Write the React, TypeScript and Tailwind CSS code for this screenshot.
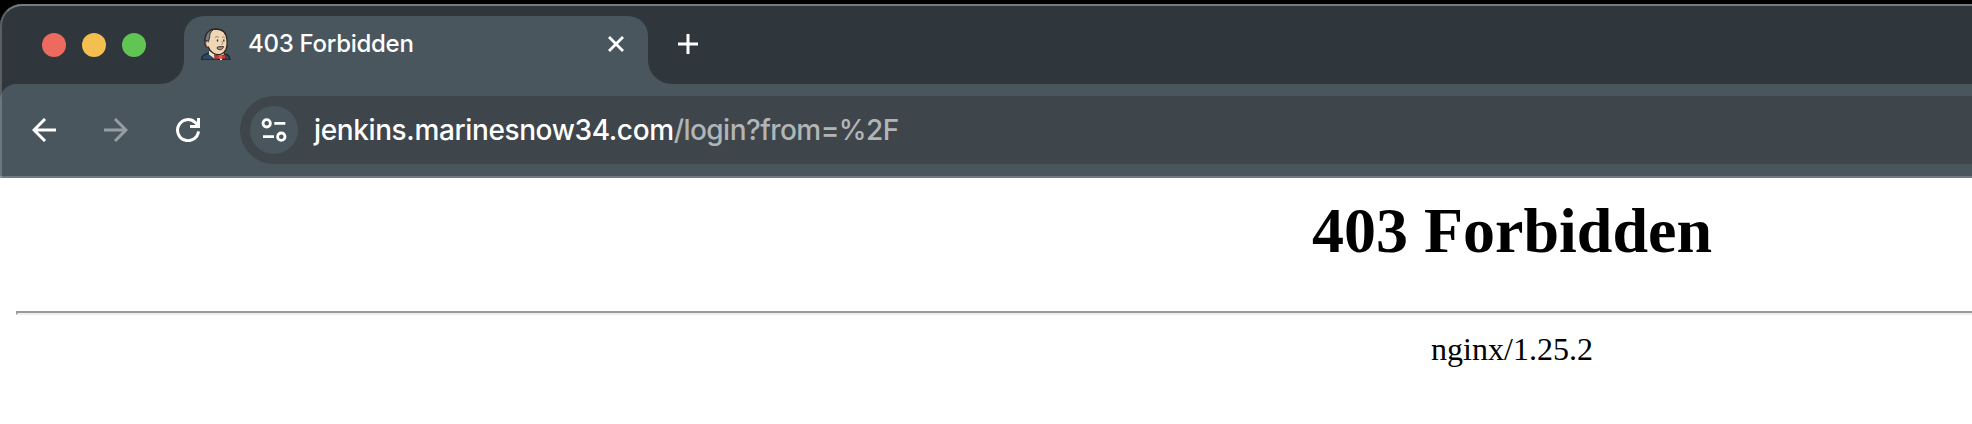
function JenkinsIcon() {
  return (
    <svg width="32" height="32" viewBox="0 0 32 32" aria-hidden="true">
      <path d="M1.500 32C1.500 28.500 2.500 27.500 5 26.500L10 24.500L21 25.500L27 26.500C29.500 28 30 30 30 32Z" fill="#2d4a63" stroke="#1f2529" strokeWidth="1.300" />
      <path d="M9 23L9 26.500L15 31H23L24 25Z" fill="#f3e3c8" />
      <path d="M5 15C4 6.500 8 1.200 16 1C23.500 1 26.500 6 27 12C27.600 18 27 24.500 20.500 26.500C15 27.500 10 24 8.500 19.500C6 19.500 5 17.500 5 15Z" fill="#efd6b5" stroke="#2b2523" strokeWidth="1.300" />
      <path d="M5.200 13.500C5 7 8 2.500 13 1.800C10.500 4 9.500 6.500 9.700 9L8.200 14.500L7 12.200Z" fill="#777a80" stroke="#2b2523" strokeWidth="0.900" />
      <path d="M8.500 13.500C6.500 12.500 5.200 14.500 6 17C6.500 19 8 19.500 9 18.500" fill="#efd6b5" stroke="#5a4639" strokeWidth="0.900" />
      <path d="M15 9.500C16.500 8.200 18 8.500 18.800 9.500M22 9.500C23.500 8.500 24.500 9 25 10" fill="none" stroke="#8f7661" strokeWidth="0.900" />
      <path d="M17.500 11.500V13.500M23.800 11.500V13.500" stroke="#2b2523" strokeWidth="1.300" />
      <path d="M21.500 13C23 15 23.300 16.100 21 16.500" fill="none" stroke="#8f7661" strokeWidth="0.900" />
      <path d="M17 19.500C19 18 21.500 19 23.500 18.500C23 21.500 20 22.500 17.500 21Z" fill="#a79485" stroke="#3b302b" strokeWidth="1" />
      <path d="M14.500 26.500L20 28.200L25.500 26.500L26 31L20.500 30L15 31.500Z" fill="#d9352f" stroke="#5c2021" strokeWidth="0.700" />
      <path d="M19 27.500H22V30.500H19Z" fill="#ee5a50" />
      <path d="M20 31H22V32H20Z" fill="#fff" />
    </svg>
  );
}

function TabStrip() {
  return (
    <div className="flex h-[80px] shrink-0 bg-[#30373c] pt-[2px]">
      <div className="w-[184px] shrink-0 bg-[linear-gradient(to_right,#30373c_50%,#49565e_50%)]">
        <div className="flex h-full items-start gap-4 rounded-br-[24px] bg-[#30373c] pt-[27px] pl-[42px]">
          <span className="size-6 rounded-full bg-[#ed6a5e]" />
          <span className="size-6 rounded-full bg-[#f5bf4f]" />
          <span className="size-6 rounded-full bg-[#61c554]" />
        </div>
      </div>
      <div className="w-[464px] shrink-0 pt-[10px]">
        <div className="flex h-[68px] items-start rounded-t-[20px] bg-[#49565e] pt-[12px] pl-[16px]">
          <JenkinsIcon />
          <span className="ml-[16px] w-[358px] font-['Inter'] text-[24px] leading-[32px] font-medium tracking-[-0.28px] text-white">403 Forbidden</span>
          <svg width="20" height="20" viewBox="0 0 20 20" className="mt-[6px]" aria-hidden="true">
            <path d="M3 3L17 17M17 3L3 17" stroke="#fff" strokeWidth="2.800" />
          </svg>
        </div>
      </div>
      <div className="grow bg-[linear-gradient(to_right,#49565e_40px,#30373c_40px)]">
        <div className="h-full rounded-bl-[24px] bg-[#30373c] pt-[28px] pl-[30px]">
          <svg width="20" height="20" viewBox="0 0 20 20" aria-hidden="true">
            <path d="M10 0V20M0 10H20" stroke="#fff" strokeWidth="3" />
          </svg>
        </div>
      </div>
    </div>
  );
}

function Toolbar() {
  return (
    <div className="bg-[#30373c]">
      <div className="flex h-[94px] items-start rounded-tl-[16px] border-b-2 border-[#707a80] bg-[#49565e] pt-[12px] pl-[32px]">
        <svg width="24" height="24" viewBox="0 0 24 24" className="mt-[22px]" aria-hidden="true">
          <path d="M24 12H2M13 1L2 12L13 23" fill="none" stroke="#fff" strokeWidth="3" />
        </svg>
        <svg width="24" height="24" viewBox="0 0 24 24" className="mt-[22px] ml-[48px]" aria-hidden="true">
          <path d="M0 12H22M11 1L22 12L11 23" fill="none" stroke="#969da3" strokeWidth="3" />
        </svg>
        <svg width="24" height="24" viewBox="0 0 24 24" className="mt-[22px] ml-[48px]" aria-hidden="true">
          <path d="M22.500 13.300A10.500 10.500 0 1 1 19.400 4.600L22 7.500" fill="none" stroke="#fff" strokeWidth="3" />
          <path d="M22.500 0V8.500H14" fill="none" stroke="#fff" strokeWidth="3" />
        </svg>
        <div className="ml-[40px] flex h-[68px] grow items-center rounded-l-full bg-[#3e454b] pl-[10px]">
          <div className="flex size-12 items-center justify-center rounded-full bg-[#49565e]">
            <svg width="28" height="28" viewBox="0 0 28 28" fill="none" stroke="#fff" strokeWidth="2.800" aria-hidden="true">
              <circle cx="6.700" cy="7.300" r="3.700" />
              <path d="M14.300 7.300H25.300M3 20.700H14" />
              <circle cx="21.300" cy="20.700" r="3.700" />
            </svg>
          </div>
          <div className="ml-[16px] font-['Inter'] text-[28px] leading-[34px] font-medium whitespace-nowrap">
            <span className="tracking-[-0.38px] text-white">jenkins.marinesnow34.com</span>
            <span className="tracking-[-0.55px] text-[#b2b5b7]">/login?from=%2F</span>
          </div>
        </div>
      </div>
    </div>
  );
}

export default function App() {
  return (
    <div className="h-[424px] w-full overflow-hidden bg-black pt-[4px]">
      <div className="relative flex h-[420px] flex-col overflow-hidden rounded-tl-[22px] bg-white">
        <TabStrip />
        <Toolbar />
        <main className="w-[3024px] px-[16px] text-center font-['Liberation_Serif'] text-black">
          <h1 className="pt-[16px] text-[64px] leading-[74px] font-bold">403 Forbidden</h1>
          <hr className="mt-[43px] h-[4px] border-t-2 border-b-2 border-l-2 border-t-[#9a9a9a] border-b-[#eeeeee] border-l-[#9a9a9a]" />
          <p className="mt-[16px] text-[32px] leading-[36px]">nginx/1.25.2</p>
        </main>
        <div className="pointer-events-none absolute inset-x-0 top-0 h-[174px] rounded-tl-[22px] border-t-2 border-l-2 border-t-[#747c7f] border-l-white/20" />
      </div>
    </div>
  );
}
